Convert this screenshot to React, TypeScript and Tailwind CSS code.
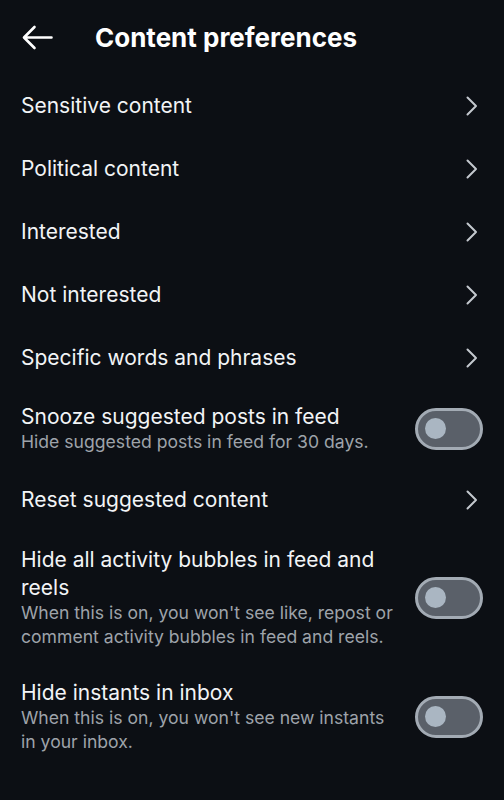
import React from "react";

const links = [
  "Sensitive content",
  "Political content",
  "Interested",
  "Not interested",
  "Specific words and phrases",
];

function Chevron() {
  return (
    <svg width="12" height="20" viewBox="0 0 12 20" fill="none" className="shrink-0 text-[#c4c8ce]">
      <path d="M1.5 1.5 L10 10 L1.5 18.5" stroke="currentColor" strokeWidth="2" strokeLinecap="round" strokeLinejoin="round" />
    </svg>
  );
}

function Toggle() {
  return (
    <div className="flex h-[42px] w-[68px] shrink-0 items-center rounded-full border-[3px] border-[#a3abb4] bg-[#5a6069] pl-[7px]">
      <div className="h-[21px] w-[21px] rounded-full bg-[#aab6c2]" />
    </div>
  );
}

function LinkRow({ label }: { label: string }) {
  return (
    <div className="flex h-[63px] items-center justify-between pl-[21px] pr-[26px]">
      <span className="text-[21px] text-[#f2f4f6]">{label}</span>
      <Chevron />
    </div>
  );
}

function ToggleRow({ title, sub, pad }: { title: string; sub: string; pad: string }) {
  return (
    <div className={`flex items-center gap-[16px] pl-[21px] pr-[21px] ${pad}`}>
      <div className="flex-1">
        <p className="text-[21px] leading-7 text-[#f2f4f6]">{title}</p>
        <p className="-mt-px text-[17.6px] leading-6 text-[#9ea3aa]">{sub}</p>
      </div>
      <Toggle />
    </div>
  );
}

export default function App() {
  return (
    <main className="min-h-[800px] w-full bg-[#0c0f14] font-['Inter',sans-serif]">
      {/* Header */}
      <header className="flex h-[74px] items-center pl-[22px]">
        <svg width="31" height="25" viewBox="0 0 31 25" fill="none" className="text-white">
          <path d="M29.5 12.5 H2.5 M12.5 2 L2 12.5 L12.5 23" stroke="currentColor" strokeWidth="2.6" strokeLinecap="round" strokeLinejoin="round" />
        </svg>
        <h1 className="ml-[42px] text-[26px] font-bold text-white">Content preferences</h1>
      </header>

      {links.map((l) => (
        <LinkRow key={l} label={l} />
      ))}

      <ToggleRow
        title="Snooze suggested posts in feed"
        sub="Hide suggested posts in feed for 30 days."
        pad="py-[14px]"
      />

      <LinkRow label="Reset suggested content" />

      <ToggleRow
        title="Hide all activity bubbles in feed and reels"
        sub="When this is on, you won't see like, repost or comment activity bubbles in feed and reels."
        pad="py-[15px]"
      />

      <ToggleRow
        title="Hide instants in inbox"
        sub="When this is on, you won't see new instants in your inbox."
        pad="py-[15px]"
      />
    </main>
  );
}
